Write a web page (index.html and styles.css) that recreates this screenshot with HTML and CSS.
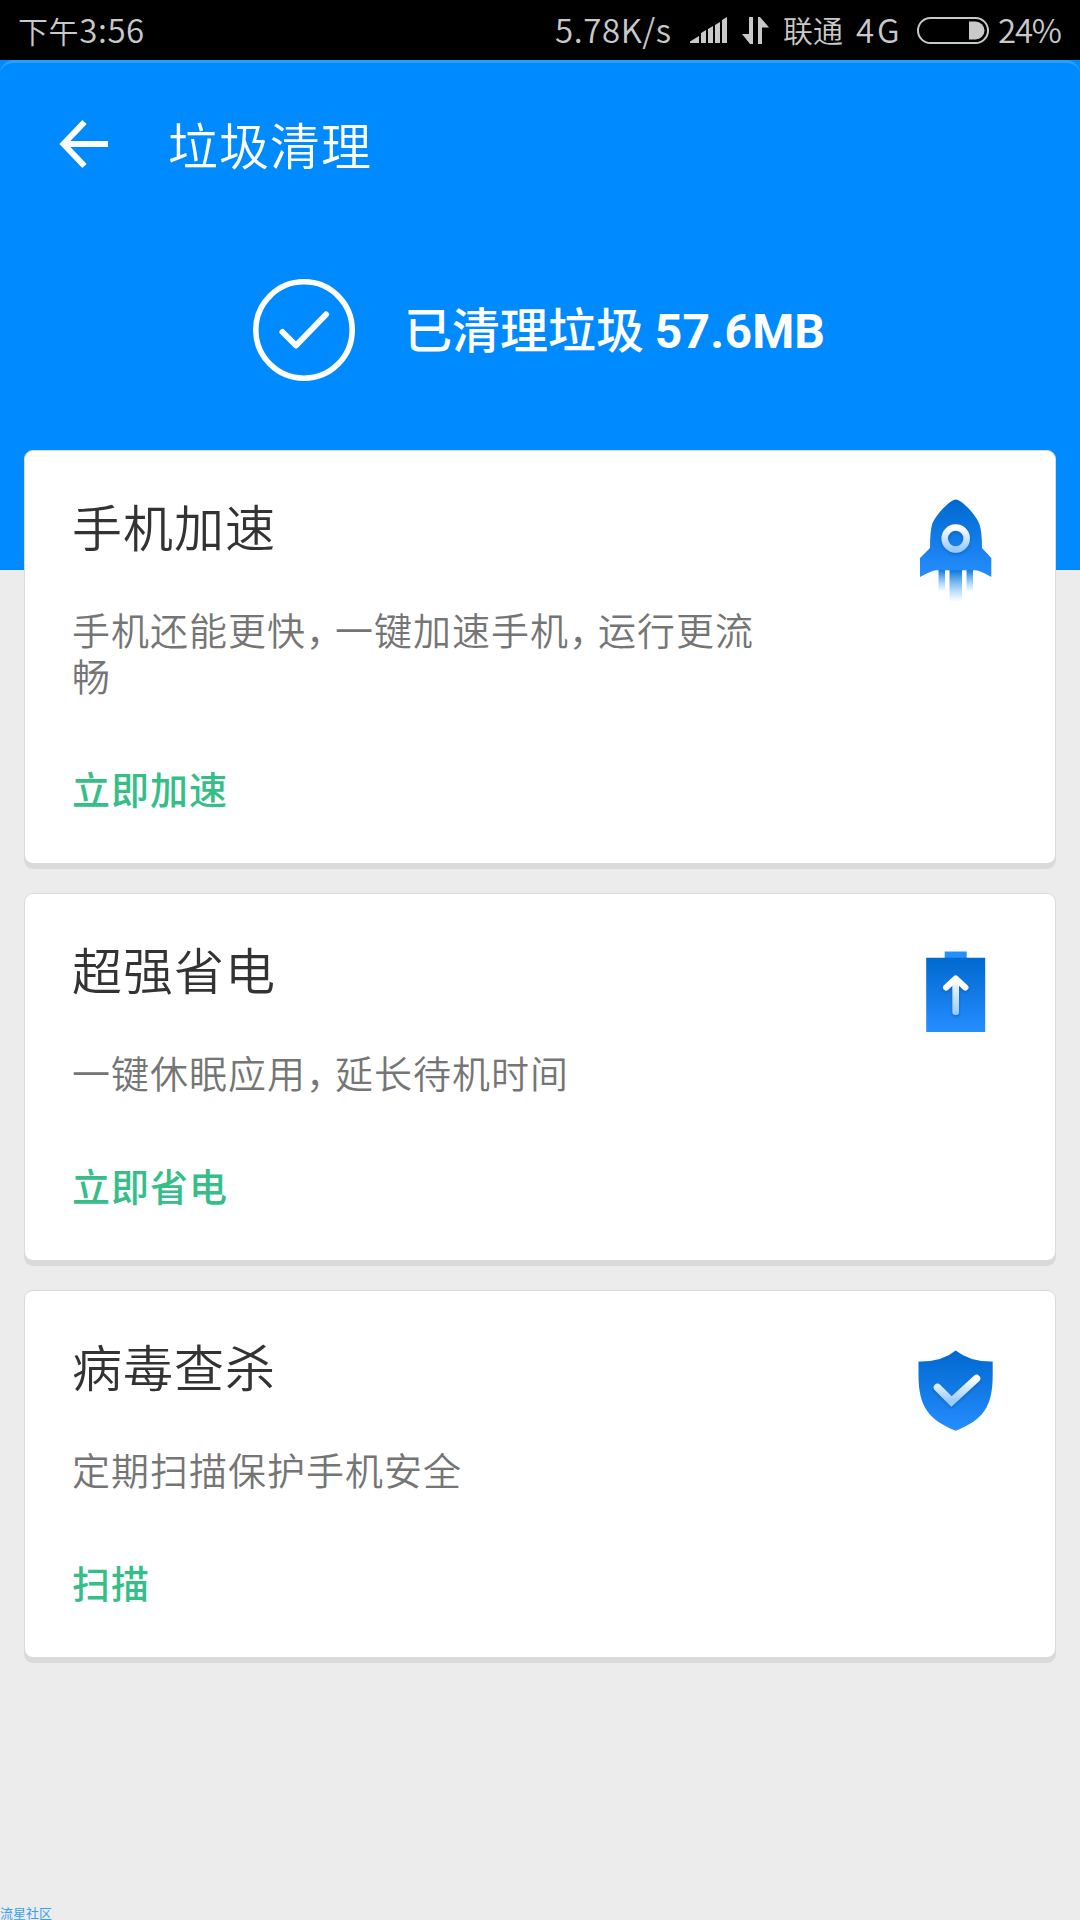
FILE: index.html
```html
<!DOCTYPE html>
<html lang="zh-CN">
<head>
<meta charset="utf-8">
<title>垃圾清理</title>
<link rel="stylesheet" href="styles.css">
</head>
<body>
<div class="screen">
  <div class="status">
    <span class="time"><small>下午</small>3:56</span>
    <span class="speed">5.78K/s</span>
    <svg class="signal" width="37" height="26" viewBox="0 0 37 26"><path d="M0 26V24.500L9 19V26ZM11 26V16L16 13V26ZM18 26V12L23 9V26ZM25 26V8L30 5V26ZM32 26V3L37 0V26Z"/></svg>
    <svg class="updown" width="27" height="27" viewBox="0 0 27 27"><path d="M7 0H11V27H8L0 17H7ZM16 0H18L27 10.500H20V27H16Z"/></svg>
    <span class="carrier">联通</span>
    <span class="net">4G</span>
    <svg class="battery" width="72" height="27" viewBox="0 0 72 27"><rect x="1" y="1" width="70" height="25" rx="12.500" fill="none" stroke="#c9c9c9" stroke-width="2"/><path d="M52 4.500H58.500A9 9 0 0 1 58.500 22.500H52Z"/></svg>
    <span class="percent">24%</span>
  </div>
  <header class="hero">
    <div class="toolbar">
      <svg width="50" height="50" viewBox="0 0 50 50"><path d="M25.500 3L4.500 25L25.500 47M5 25H49" fill="none" stroke="#fff" stroke-width="6"/></svg>
      <h1>垃圾清理</h1>
    </div>
    <div class="result">
      <svg width="102" height="102" viewBox="0 0 102 102" fill="none" stroke="#fff" stroke-linecap="round" stroke-linejoin="round"><circle cx="51" cy="51" r="48.200" stroke-width="5.600"/><path d="M29.500 53L43 66.500L73 35.500" stroke-width="6"/></svg>
      <p>已清理垃圾 <b>57.6MB</b></p>
    </div>
  </header>
  <main class="cards">
    <section class="card">
      <div class="copy">
        <h2>手机加速</h2>
        <p>手机还能更快<i>，</i>一键加速手机<i>，</i>运行更流畅</p>
        <a>立即加速</a>
      </div>
      <svg class="icon" width="76" height="104" viewBox="0 0 76 104">
        <defs>
          <linearGradient id="blue" x1="0" y1="0" x2="0" y2="1"><stop offset="0" stop-color="#0069cf"/><stop offset="1" stop-color="#268dff"/></linearGradient>
          <linearGradient id="flame" x1="0" y1="0" x2="0" y2="1"><stop offset="0" stop-color="#0070d6"/><stop offset="1" stop-color="#4aa8ff" stop-opacity="0"/></linearGradient>
          <linearGradient id="pale" x1="0" y1="0" x2="0" y2="1"><stop offset="0" stop-color="#fff"/><stop offset="1" stop-color="#98cbff"/></linearGradient>
          <filter id="soft" x="-30%" y="-30%" width="160%" height="160%"><feDropShadow dx="0" dy="1.500" stdDeviation="1.500" flood-color="#004a99" flood-opacity=".5"/></filter>
        </defs>
        <path d="M20.500 70H27V93H20.500ZM48.500 70H55V93H48.500Z" fill="url(#flame)"/>
        <path d="M31.500 70H44V103H31.500Z" fill="url(#flame)"/>
        <path d="M37.700 0.500C33 0.500 19 14 14.500 24Q12 31 12 49L2 59V78Q12 72.500 18 71.300H57.500Q64 72.500 73.300 78V59L64 49Q64 31 61 24C56.500 14 43 0.500 37.700 0.500Z" fill="url(#blue)"/>
        <circle cx="37.700" cy="39.500" r="11" fill="none" stroke="url(#pale)" stroke-width="6.500" filter="url(#soft)"/>
      </svg>
    </section>
    <section class="card">
      <div class="copy">
        <h2>超强省电</h2>
        <p>一键休眠应用<i>，</i>延长待机时间</p>
        <a>立即省电</a>
      </div>
      <svg class="icon" width="76" height="104" viewBox="0 0 76 104">
        <path d="M26.700 9.500H48.700V17H26.700Z" fill="#2490ff"/>
        <path d="M8.200 15.700H67.200V90H8.200Z" fill="url(#blue)"/>
        <g fill="url(#pale)" filter="url(#soft)">
          <rect x="34.400" y="35" width="6.600" height="38" rx="3.300"/>
          <path d="M28 45.500L37.700 36.500L47.400 45.500" fill="none" stroke="#fff" stroke-width="6" stroke-linecap="round" stroke-linejoin="round"/>
        </g>
      </svg>
    </section>
    <section class="card">
      <div class="copy">
        <h2>病毒查杀</h2>
        <p>定期扫描保护手机安全</p>
        <a>扫描</a>
      </div>
      <svg class="icon" width="76" height="104" viewBox="0 0 76 104">
        <path d="M37.700 11.500Q52 23 74.700 22.500V36C74.700 68 65 81 37.700 91.700C11 81 0.500 68 0.500 36V22.500Q24 23 37.700 11.500Z" fill="url(#blue)"/>
        <path d="M19.500 48.500L33.500 62.500L58.500 39.500" fill="none" stroke="url(#pale)" stroke-width="7.500" stroke-linecap="round" filter="url(#soft)"/>
      </svg>
    </section>
  </main>
  <footer class="mark">流星社区</footer>
</div>
</body>
</html>
```

FILE: styles.css
```css
* { box-sizing: border-box; margin: 0; padding: 0; }
body {
  width: 1080px;
  height: 1920px;
  overflow: hidden;
  background: #ececec;
  font-family: "Noto Sans CJK SC", sans-serif;
}
svg { display: block; flex: none; }
.screen { display: flex; flex-direction: column; height: 1920px; }
.status {
  display: flex;
  align-items: center;
  flex: none;
  height: 60px;
  padding-left: 18px;
  background: #000;
  color: #c9c9c9;
  fill: #c9c9c9;
  font-size: 33px;
  font-weight: 350;
  line-height: 59px;
  white-space: nowrap;
}
.status span { flex: none; height: 60px; }
.status small { font-size: 30px; }
.time { width: 537px; letter-spacing: .6px; }
.speed { width: 135px; letter-spacing: .6px; }
.signal { margin-right: 15px; }
.updown { margin-right: 14px; }
.status .carrier { width: 73px; font-size: 30px; }
.net { width: 61px; letter-spacing: 3px; }
.battery { margin-right: 9px; }
.percent { letter-spacing: -1.2px; }
.hero { flex: none; height: 510px; background: #008aff; color: #fff; }
.toolbar {
  display: flex;
  align-items: center;
  gap: 59px;
  height: 165px;
  padding-left: 59px;
  border-top: 3px solid #2b9dff;
  border-radius: 14px 14px 0 0;
}
.toolbar h1 { margin-top: -2px; font-size: 50px; font-weight: 350; letter-spacing: 1px; line-height: 60px; }
.result { display: flex; align-items: center; gap: 49px; padding: 54px 0 0 253px; }
.result p { margin-top: -1px; font-size: 48px; font-weight: 500; line-height: 60px; white-space: nowrap; }
.result b { font-family: Roboto, sans-serif; font-weight: 700; letter-spacing: .2px; }
.cards { display: flex; flex-direction: column; gap: 29px; margin: -120px 24px 0; }
.card {
  display: flex;
  justify-content: space-between;
  padding: 44px 61px 52px 47px;
  background: #fff;
  border: 1px solid #dadada;
  border-radius: 9px;
  box-shadow: 0 5px 0 #dadada;
}
.copy { display: flex; flex-direction: column; width: 700px; }
.card h2 { color: #333; font-size: 50px; font-weight: 350; letter-spacing: 1px; line-height: 60px; }
.card p { margin-top: 51px; color: #757575; font-size: 38px; font-weight: 350; letter-spacing: 1px; line-height: 46px; }
.card i { margin-right: 9px; font-style: normal; font-feature-settings: "halt"; }
.card a { margin-top: 67px; color: #36be89; font-size: 38px; font-weight: 500; letter-spacing: 1px; line-height: 46px; }
.icon { margin-top: 4px; }
.mark { margin-top: auto; color: #3a9ff0; font-size: 13px; line-height: 14px; }
```
